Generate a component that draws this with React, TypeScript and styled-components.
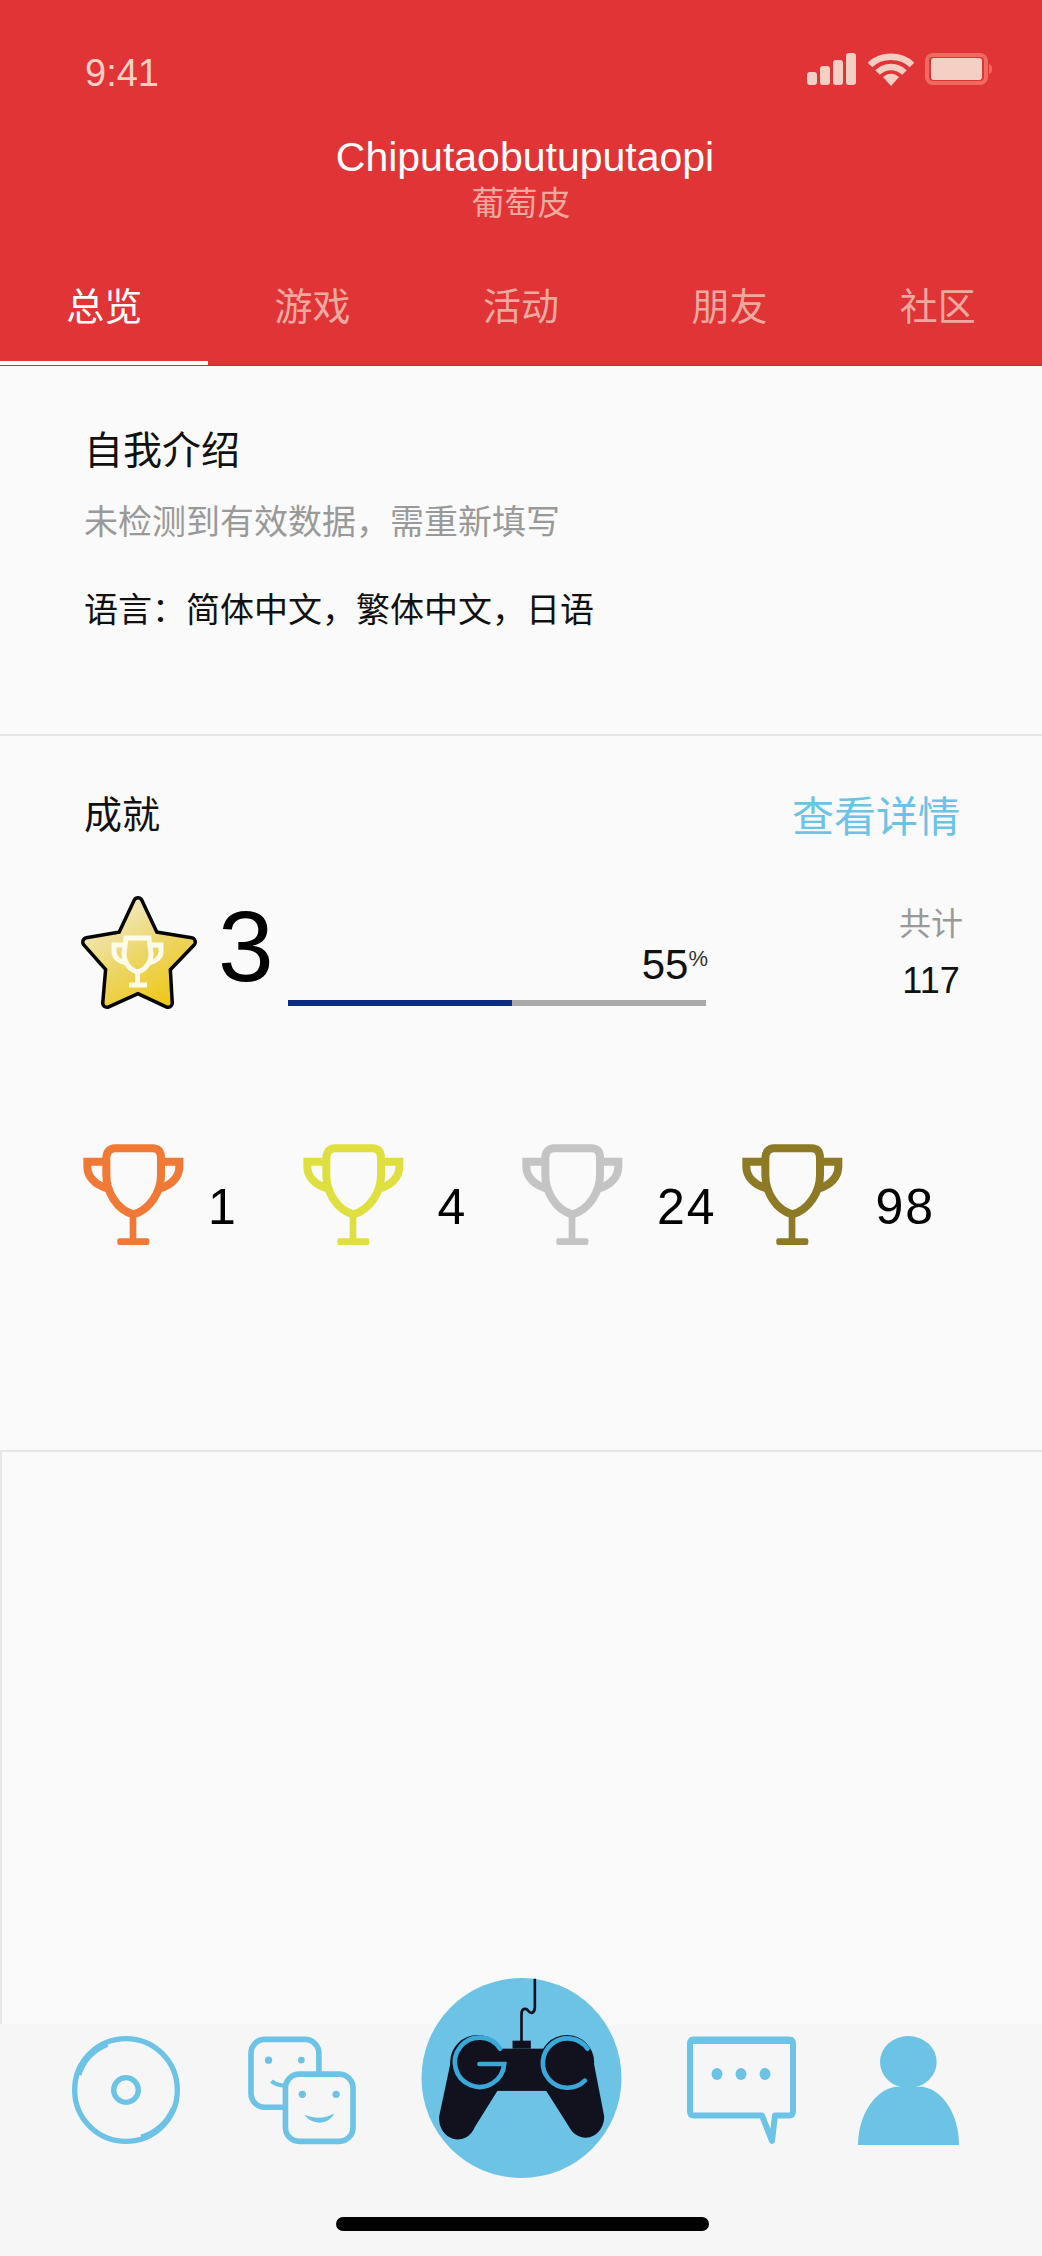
import React from 'react';
import styled, { createGlobalStyle } from 'styled-components';

const GlobalStyle = createGlobalStyle`
  html, body {
    margin: 0;
    padding: 0;
    background: #fafafa;
  }
  * {
    box-sizing: border-box;
  }
`;

const BLUE = '#6cc3e6';

const Page = styled.div`
  width: 1042px;
  height: 2256px;
  display: flex;
  flex-direction: column;
  overflow: hidden;
  background: #fafafa;
  color: #111;
  font-family: "Liberation Sans", "Noto Sans CJK SC", sans-serif;
`;

const Header = styled.header`
  background: #e03437;
  height: 366px;
  padding-top: 50px;
  border-bottom: 1px solid #c42d35;
`;

const StatusBar = styled.div`
  height: 46px;
  padding: 0 47px 0 85px;
  display: flex;
  align-items: flex-start;
  justify-content: space-between;
`;

const Time = styled.span`
  font-size: 38px;
  line-height: 46px;
  color: #f6cfc4;
`;

const StatusIcons = styled.div`
  margin-top: 3px;
  display: flex;
  align-items: flex-start;
  gap: 11px;
  line-height: 0;
`;

const Name = styled.div`
  margin-top: 39px;
  padding-left: 8px;
  font-size: 41px;
  line-height: 44px;
  text-align: center;
  color: #fff;
`;

const SubName = styled.div`
  margin-top: 2px;
  font-size: 33px;
  line-height: 46px;
  text-align: center;
  color: #f0a99f;
`;

const Tabs = styled.nav`
  height: 99px;
  margin-top: 39px;
  display: grid;
  grid-template-columns: repeat(5, 1fr);
`;

const Tab = styled.div<{ $active?: boolean }>`
  padding-top: 20px;
  font-size: 38px;
  line-height: 42px;
  text-align: center;
  color: ${(p) => (p.$active ? '#fff' : '#eda9a0')};
  border-bottom: ${(p) => (p.$active ? '4px solid #fff' : 'none')};
`;

const Intro = styled.section`
  height: 370px;
  padding: 61px 0 0 84px;
  border-bottom: 2px solid #e6e6e6;
`;

const IntroTitle = styled.h2`
  margin: 0;
  font-size: 39px;
  font-weight: 400;
  line-height: 48px;
  color: #111;
`;

const IntroHint = styled.p`
  margin: 23px 0 0;
  font-size: 34px;
  line-height: 48px;
  color: #999;
`;

const IntroLang = styled.p`
  margin: 40px 0 0;
  font-size: 34px;
  line-height: 48px;
  color: #111;
`;

const Achievements = styled.section`
  height: 716px;
  padding: 54px 78px 0 84px;
  border-bottom: 2px solid #e6e6e6;
`;

const SectionHead = styled.div`
  display: flex;
  justify-content: space-between;
  align-items: flex-start;
  height: 60px;
`;

const SectionTitle = styled.h2`
  margin: 0;
  font-size: 38px;
  font-weight: 400;
  line-height: 50px;
`;

const DetailLink = styled.a`
  margin: -2px 4px 0 0;
  font-size: 42px;
  line-height: 60px;
  color: ${BLUE};
`;

const LevelRow = styled.div`
  margin: 43px 0 0 -6px;
  height: 120px;
  display: flex;
  align-items: flex-start;
`;

const LevelNumber = styled.div`
  margin: 3px 0 0 20px;
  width: 50px;
  font-size: 100px;
  line-height: 100px;
  color: #000;
`;

const Progress = styled.div`
  margin-left: 20px;
  width: 418px;
  height: 113px;
  display: flex;
  flex-direction: column;
  justify-content: flex-end;
`;

const Percent = styled.div`
  margin: 0 -2px 15px 0;
  text-align: right;
  font-size: 42px;
  line-height: 40px;
  sup {
    font-size: 22px;
    line-height: 0;
    vertical-align: 13px;
    color: #333;
  }
`;

const Track = styled.div`
  height: 6px;
  background: #aaa;
`;

const TrackFill = styled.div`
  height: 100%;
  background: #0d2d80;
`;

const Total = styled.div`
  margin: 11px 0 0 auto;
  width: 66px;
  text-align: center;
`;

const TotalLabel = styled.div`
  font-size: 32px;
  line-height: 40px;
  color: #999;
`;

const TotalValue = styled.div`
  margin-top: 17px;
  font-size: 36px;
  line-height: 40px;
`;

const TrophyRow = styled.div`
  margin: 131px 0 0 -1px;
  display: grid;
  grid-template-columns: repeat(4, 219.5px);
`;

const TrophyItem = styled.div`
  display: flex;
  align-items: flex-start;
`;

const TrophyCount = styled.span<{ $gap: number }>`
  margin: 36px 0 0 ${(p) => p.$gap}px;
  font-size: 50px;
  line-height: 54px;
  letter-spacing: 2px;
  color: #000;
`;

const Filler = styled.div`
  flex: 1;
  border-left: 2px solid #e6e6e6;
`;

const BottomBar = styled.footer`
  height: 232px;
  padding-top: 12px;
  background: #f6f6f6;
`;

const NavRow = styled.div`
  height: 181px;
  padding-left: 72px;
  display: flex;
  align-items: flex-start;
`;

const NavItem = styled.div<{ $gap: number; $lift?: number }>`
  margin-left: ${(p) => p.$gap}px;
  margin-top: ${(p) => -(p.$lift ?? 0)}px;
  line-height: 0;
`;

const HomeBar = styled.div`
  width: 373px;
  height: 14px;
  margin-left: 336px;
  border-radius: 7px;
  background: #000;
`;

const SignalIcon = () => (
  <svg width="50" height="32" viewBox="0 0 50 32" fill="#f6cfc4">
    <rect x="0" y="19" width="10" height="13" rx="3" />
    <rect x="13" y="13" width="10" height="19" rx="3" />
    <rect x="26" y="7" width="10" height="25" rx="3" />
    <rect x="39" y="0" width="10" height="32" rx="3" />
  </svg>
);

const WifiIcon = () => (
  <svg width="46" height="33" viewBox="0 0 46 33" fill="none" stroke="#f6cfc4" strokeWidth="6.5">
    <path d="M2 12 C13 1 33 1 44 12" />
    <path d="M9.5 19.5 C17 12 29 12 36.5 19.5" />
    <path d="M15 24 L23 33 L31 24 C26 19.5 20 19.5 15 24 Z" fill="#f6cfc4" stroke="none" />
  </svg>
);

const BatteryIcon = () => (
  <svg width="70" height="32" viewBox="0 0 70 32">
    <rect x="2" y="2" width="59" height="28" rx="6" fill="none" stroke="#ef6a60" strokeWidth="4" />
    <rect x="6" y="5" width="51" height="22" rx="3" fill="#f6cfc4" />
    <path d="M64 11 C68 12 68 20 64 21 Z" fill="#ef6a60" />
  </svg>
);

const StarIcon = () => (
  <svg width="120" height="120" viewBox="18 10 120 120">
    <defs>
      <linearGradient id="starFill" gradientUnits="userSpaceOnUse" x1="50" y1="25" x2="110" y2="125">
        <stop offset="0" stopColor="#f2eac4" />
        <stop offset="0.5" stopColor="#ecd562" />
        <stop offset="1" stopColor="#f0c60f" />
      </linearGradient>
    </defs>
    <path
      d="M78 19 L94 53 L131 59 L106 85 L108 120 L78 106 L47 120 L50 85 L27 59 L62 53 Z"
      fill="#050505"
      stroke="#050505"
      strokeWidth="12"
      strokeLinejoin="round"
    />
    <path
      d="M78 19 L94 53 L131 59 L106 85 L108 120 L78 106 L47 120 L50 85 L27 59 L62 53 Z"
      fill="url(#starFill)"
      stroke="url(#starFill)"
      strokeWidth="5"
      strokeLinejoin="round"
    />
    <g fill="none" stroke="#fffbea" strokeWidth="5">
      <path d="M66 55 H89 L91 70 C91 80 85 87 77.5 89 C70 87 64 80 64 70 Z" />
      <path d="M64 62 H54 V69 C54 75 60 79 67 80" />
      <path d="M91 62 H101 V69 C101 75 95 79 88 80" />
      <path d="M77.5 89 V102" />
      <path d="M69 102 H87" />
    </g>
  </svg>
);

const TrophyIcon = ({ color }: { color: string }) => (
  <svg width="101" height="101" viewBox="39 27 303 303" fill="none" stroke={color} strokeWidth="24">
    <path d="M135 40 H247 C265 40 273 50 273 70 V120 C273 170 240 225 190 238 C140 225 109 170 109 120 V70 C109 50 120 40 135 40 Z" />
    <path d="M109 80 H52 V95 C52 125 75 150 113 160" />
    <path d="M273 80 H328 V95 C328 125 305 150 270 160" />
    <path d="M189 238 V315" strokeWidth="20" />
    <rect x="142" y="310" width="96" height="20" rx="6" fill={color} stroke="none" />
  </svg>
);

const DiscIcon = () => (
  <svg width="108" height="109" viewBox="38 33 324 327" fill="none" stroke={BLUE} strokeWidth="16">
    <circle cx="200" cy="195" r="154" />
    <circle cx="200" cy="195" r="37" />
    <path d="M60 150 A147 147 0 0 1 145 60" strokeWidth="12" />
    <path d="M245 335 A147 147 0 0 0 340 250" strokeWidth="12" />
  </svg>
);

const FacesIcon = () => (
  <svg width="108" height="109" viewBox="22 33 326 327">
    <rect x="31" y="42" width="205" height="205" rx="42" fill="#f6f6f6" stroke={BLUE} strokeWidth="17" />
    <circle cx="84" cy="105" r="11" fill={BLUE} />
    <circle cx="183" cy="105" r="10" fill={BLUE} />
    <path d="M93 168 C103 176 115 181 132 182" fill="none" stroke={BLUE} strokeWidth="13" />
    <rect x="135" y="147" width="204" height="203" rx="42" fill="#f6f6f6" stroke={BLUE} strokeWidth="17" />
    <circle cx="186" cy="208" r="11" fill={BLUE} />
    <circle cx="288" cy="208" r="11" fill={BLUE} />
    <path d="M192 270 C220 282 255 282 282 266 C265 302 215 302 192 270 Z" fill={BLUE} />
  </svg>
);

const ControllerIcon = () => (
  <svg width="201" height="200" viewBox="62 50 600 600">
    <circle cx="362" cy="350" r="300" fill={BLUE} />
    <path
      d="M402 52 V140 C400 158 388 158 382 148 C374 138 362 142 362 158 V240"
      fill="none"
      stroke="#12121e"
      strokeWidth="8"
    />
    <path d="M335 262 V238 H390 V262 Z" fill="#12121e" />
    <path
      d="M150 300 L115 465 A56 62 0 0 0 222 497 L290 388 H436 L505 497 A56 62 0 0 0 610 465 L578 300 Z"
      fill="#12121e"
    />
    <circle cx="230" cy="303" r="82" fill="#12121e" />
    <circle cx="498" cy="303" r="82" fill="#12121e" />
    <rect x="290" y="262" width="150" height="126" fill="#12121e" />
    <g fill="none" stroke="#3aa8d8" strokeWidth="14" strokeLinecap="round">
      <path d="M298 262 A74 74 0 1 0 310 308 H236" />
      <path d="M560 262 A74 74 0 1 0 552 358" />
    </g>
  </svg>
);

const SpeechIcon = () => (
  <svg width="109" height="109" viewBox="0 0 109 109">
    <path
      d="M7 3.5 H102 C105 3.5 106 5 106 8 V75 C106 78 105 79.5 102 79.5 H88 L85 105 L75 79.5 H7 C4 79.5 3 78 3 75 V8 C3 5 4 3.5 7 3.5 Z"
      fill="none"
      stroke={BLUE}
      strokeWidth="6"
      strokeLinejoin="round"
    />
    <rect x="2" y="1" width="105" height="7" rx="3" fill={BLUE} />
    <ellipse cx="30" cy="38" rx="5.5" ry="6" fill={BLUE} />
    <ellipse cx="54" cy="38" rx="5.5" ry="6" fill={BLUE} />
    <ellipse cx="78" cy="38" rx="5.5" ry="6" fill={BLUE} />
  </svg>
);

const PersonIcon = () => (
  <svg width="101" height="109" viewBox="24 33 303 327" fill={BLUE}>
    <ellipse cx="175" cy="111" rx="85" ry="78" />
    <path d="M24 360 C24 270 75 195 135 185 H218 C280 195 327 270 327 360 Z" />
  </svg>
);

const trophies = [
  { color: '#f07a35', count: 1, gap: 24 },
  { color: '#dfe040', count: 4, gap: 34 },
  { color: '#c4c4c4', count: 24, gap: 34 },
  { color: '#8e7a25', count: 98, gap: 33 },
];

const tabs = ['总览', '游戏', '活动', '朋友', '社区'];

export default function App() {
  return (
    <Page>
      <GlobalStyle />
      <Header>
        <StatusBar>
          <Time>9:41</Time>
          <StatusIcons>
            <SignalIcon />
            <WifiIcon />
            <BatteryIcon />
          </StatusIcons>
        </StatusBar>
        <Name>Chiputaobutuputaopi</Name>
        <SubName>葡萄皮</SubName>
        <Tabs>
          {tabs.map((t, i) => (
            <Tab key={t} $active={i === 0}>
              {t}
            </Tab>
          ))}
        </Tabs>
      </Header>

      <Intro>
        <IntroTitle>自我介绍</IntroTitle>
        <IntroHint>未检测到有效数据，需重新填写</IntroHint>
        <IntroLang>语言：简体中文，繁体中文，日语</IntroLang>
      </Intro>

      <Achievements>
        <SectionHead>
          <SectionTitle>成就</SectionTitle>
          <DetailLink>查看详情</DetailLink>
        </SectionHead>
        <LevelRow>
          <StarIcon />
          <LevelNumber>3</LevelNumber>
          <Progress>
            <Percent>
              55<sup>%</sup>
            </Percent>
            <Track>
              <TrackFill style={{ width: '53.6%' }} />
            </Track>
          </Progress>
          <Total>
            <TotalLabel>共计</TotalLabel>
            <TotalValue>117</TotalValue>
          </Total>
        </LevelRow>
        <TrophyRow>
          {trophies.map((t) => (
            <TrophyItem key={t.color}>
              <TrophyIcon color={t.color} />
              <TrophyCount $gap={t.gap}>{t.count}</TrophyCount>
            </TrophyItem>
          ))}
        </TrophyRow>
      </Achievements>

      <Filler />

      <BottomBar>
        <NavRow>
          <NavItem $gap={0}>
            <DiscIcon />
          </NavItem>
          <NavItem $gap={68}>
            <FacesIcon />
          </NavItem>
          <NavItem $gap={65} $lift={58}>
            <ControllerIcon />
          </NavItem>
          <NavItem $gap={65}>
            <SpeechIcon />
          </NavItem>
          <NavItem $gap={62}>
            <PersonIcon />
          </NavItem>
        </NavRow>
        <HomeBar />
      </BottomBar>
    </Page>
  );
}
